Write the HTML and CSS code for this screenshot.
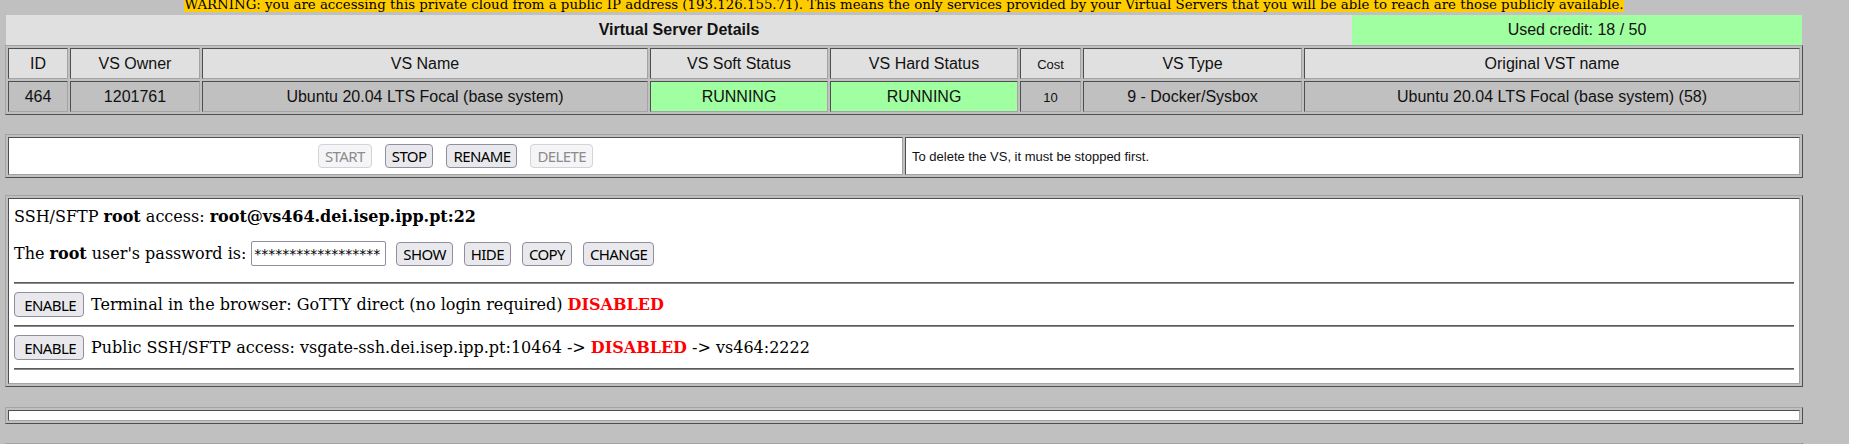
FILE: index.html
```html
<!DOCTYPE html>
<html>
<head>
<meta charset="utf-8">
<title>Virtual Server Details</title>
<link rel="stylesheet" href="styles.css">
</head>
<body>
<div class="page">
  <div class="warn"><span>WARNING: you are accessing this private cloud from a public IP address (193.126.155.71). This means the only services provided by your Virtual Servers that you will be able to reach are those publicly available.</span></div>

  <div class="vsbar">
    <div class="vsbar-title">Virtual Server Details</div>
    <div class="vsbar-credit">Used credit: 18 / 50</div>
  </div>

  <div class="box vs">
    <div class="cell head">ID</div>
    <div class="cell head">VS Owner</div>
    <div class="cell head">VS Name</div>
    <div class="cell head">VS Soft Status</div>
    <div class="cell head">VS Hard Status</div>
    <div class="cell head small">Cost</div>
    <div class="cell head">VS Type</div>
    <div class="cell head">Original VST name</div>

    <div class="cell data">464</div>
    <div class="cell data">1201761</div>
    <div class="cell data">Ubuntu 20.04 LTS Focal (base system)</div>
    <div class="cell ok">RUNNING</div>
    <div class="cell ok">RUNNING</div>
    <div class="cell data small">10</div>
    <div class="cell data">9 - Docker/Sysbox</div>
    <div class="cell data">Ubuntu 20.04 LTS Focal (base system) (58)</div>
  </div>

  <div class="box actions">
    <div class="cell white act">
      <button class="btn" disabled>START</button>
      <button class="btn">STOP</button>
      <button class="btn">RENAME</button>
      <button class="btn" disabled>DELETE</button>
    </div>
    <div class="cell white note">To delete the VS, it must be stopped first.</div>
  </div>

  <div class="box ssh">
    <div class="cell white ssh-cell">
      <div class="line">SSH/SFTP <b>root</b> access: <b>root@vs464.dei.isep.ipp.pt:22</b></div>
      <div class="row row-pw">
        <span class="txt">The <b>root</b> user's password is:</span>
        <input class="pw" type="text" value="******************" readonly>
        <button class="btn gap10">SHOW</button>
        <button class="btn gap11">HIDE</button>
        <button class="btn gap11">COPY</button>
        <button class="btn gap11">CHANGE</button>
      </div>
      <hr class="sep first">
      <div class="row">
        <button class="btn enable">&nbsp;ENABLE</button>
        <span class="txt after">Terminal in the browser: GoTTY direct (no login required) <b class="red">DISABLED</b></span>
      </div>
      <hr class="sep">
      <div class="row">
        <button class="btn enable">&nbsp;ENABLE</button>
        <span class="txt after">Public SSH/SFTP access: vsgate-ssh.dei.isep.ipp.pt:10464 -&gt; <b class="red">DISABLED</b> -&gt; vs464:2222</span>
      </div>
      <hr class="sep">
    </div>
  </div>

  <div class="box empty">
    <div class="cell white"></div>
  </div>

  <div class="box empty next">
    <div class="cell white"></div>
  </div>
</div>
</body>
</html>
```

FILE: styles.css
```css
* { box-sizing: border-box; }

html, body {
  margin: 0;
  padding: 0;
  background: #c0c0c0;
}

body {
  font-family: "DejaVu Serif", serif;
  font-size: 16px;
  color: #000;
  overflow: hidden;
}

.page {
  width: 1798px;
  margin-left: 5px;
}

.warn {
  text-align: center;
  font-size: 13.333px;
  line-height: 15px;
  margin-top: -3px;
  white-space: nowrap;
}

.warn span {
  background: #ffcc00;
}

.vsbar {
  display: flex;
  height: 30px;
  margin: 3px 1px 0;
  font-family: "Liberation Sans", Arial, sans-serif;
  font-size: 16px;
  line-height: 30px;
  text-align: center;
  color: #111;
}

.vsbar-title {
  width: 1346px;
  background: #e0e0e0;
  font-weight: bold;
}

.vsbar-credit {
  flex: 1;
  background: #a0ffa0;
}

.box {
  display: grid;
  gap: 2px;
  padding: 2px;
  border: 1px solid;
  border-color: #a4a4a4 #4e4e4e #4e4e4e #a4a4a4;
}

.cell {
  border: 1px solid;
  border-color: #4e4e4e #a4a4a4 #a4a4a4 #4e4e4e;
}

.vs {
  grid-template-columns: 60px 130px 446px 178px 188px 61px 219px 496px;
  grid-auto-rows: 31px;
  font-family: "Liberation Sans", Arial, sans-serif;
  font-size: 16px;
  color: #111;
}

.vs .cell {
  display: flex;
  align-items: center;
  justify-content: center;
  white-space: nowrap;
}

.head { background: #e0e0e0; }
.data { background: #c0c0c0; }
.ok { background: #a0ffa0; }
.vs .small { font-size: 13px; padding-top: 2px; }

.white { background: #fff; }

.actions {
  margin-top: 19px;
  grid-template-columns: 1fr 1fr;
  grid-auto-rows: 38px;
}

.act {
  display: flex;
  align-items: center;
  justify-content: center;
  gap: 13px;
}

.note {
  display: flex;
  align-items: center;
  padding-left: 6px;
  font-family: "Liberation Sans", Arial, sans-serif;
  font-size: 13px;
  color: #111;
}

.btn {
  font-family: "Noto Sans", sans-serif;
  font-size: 15px;
  letter-spacing: -0.6px;
  height: 24px;
  line-height: 20px;
  padding: 0 6px;
  margin: 0;
  border: 1px solid #8f8f9d;
  border-radius: 4px;
  background: #e9e9ed;
  color: #000;
}

.btn:disabled {
  background: #f5f5f7;
  border-color: #d2d2d8;
  color: #8c8c8c;
}

.ssh {
  margin-top: 17px;
  grid-template-columns: 1fr;
}

.ssh-cell {
  padding: 8px 5px 13px;
}

.line {
  height: 19px;
  line-height: 19px;
  white-space: nowrap;
}

.row {
  display: flex;
  align-items: center;
  height: 25px;
  margin-top: 8px;
  white-space: nowrap;
}

.row-pw { margin-top: 15px; }

.txt { line-height: 19px; }
.after { margin-left: 7px; }

.pw {
  width: 135px;
  height: 25px;
  margin: 0 0 0 5px;
  padding: 0 2px;
  border: 1px solid #8f8f9d;
  border-radius: 2px;
  font-family: "DejaVu Sans", sans-serif;
  font-size: 14px;
  color: #000;
  background: #fff;
}

.gap10 { margin-left: 10px; }
.gap11 { margin-left: 11px; }

.enable {
  width: 70px;
  height: 25px;
  padding: 0 4px 0 6px;
  text-align: left;
}

.red { color: #ff0000; }

.sep {
  height: 2px;
  margin: 8px 0 0;
  border: 0;
  border-top: 1px solid #5a5a5a;
  border-bottom: 1px solid #8a8a8a;
}

.sep.first { margin-top: 16px; }

.empty {
  margin-top: 20px;
  grid-template-columns: 1fr;
  grid-auto-rows: 11px;
}

.next { margin-top: 19px; }
```
